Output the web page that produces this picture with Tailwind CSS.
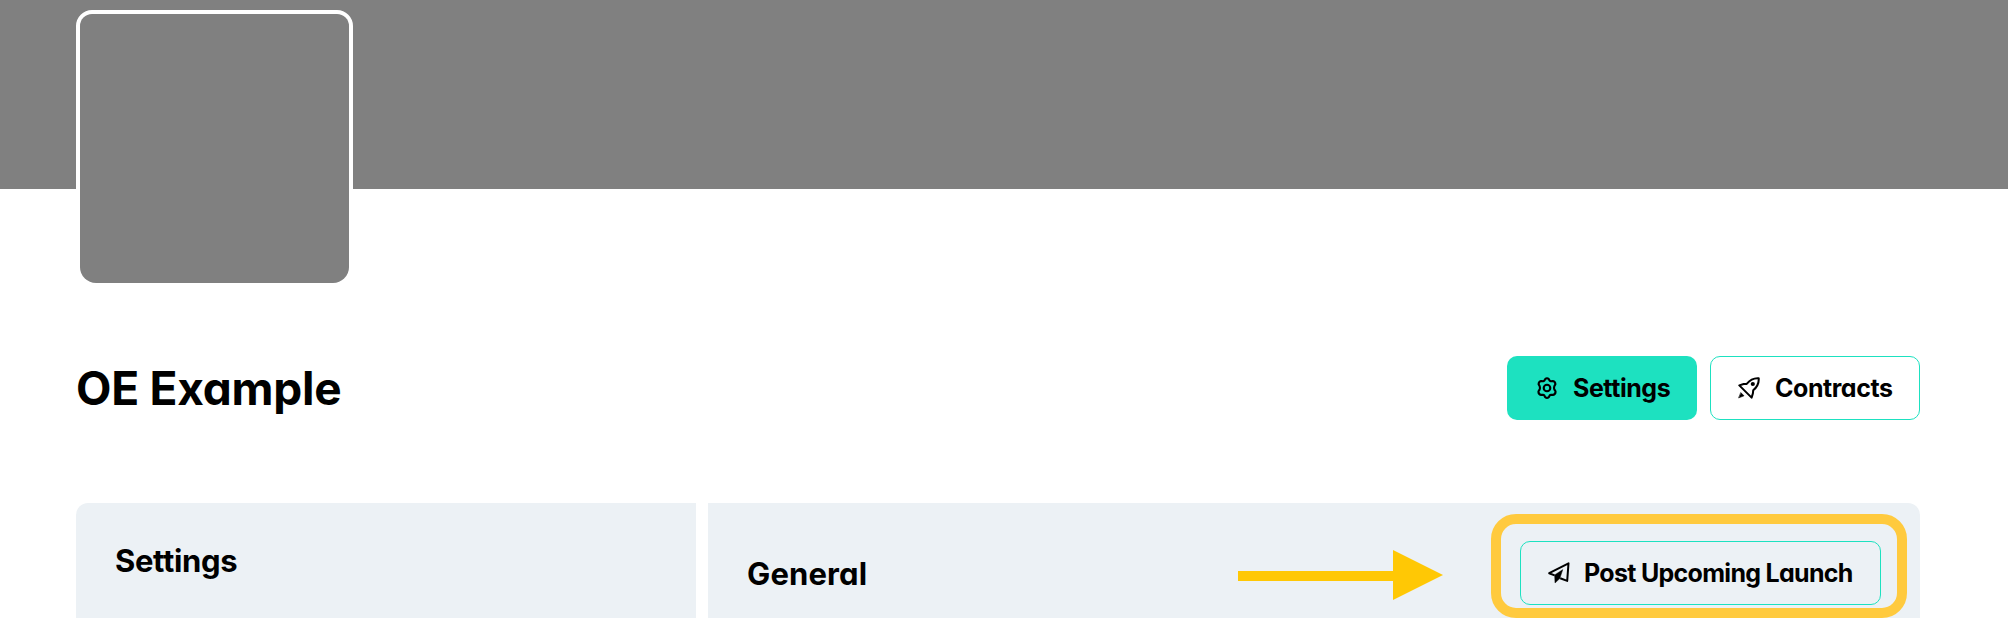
<!DOCTYPE html>
<html lang="en">
<head>
<meta charset="utf-8">
<title>OE Example</title>
<script src="https://cdn.jsdelivr.net/npm/@tailwindcss/browser@4"></script>
</head>
<body class="h-[618px] w-[2008px] overflow-hidden bg-white font-['Inter','Liberation_Sans',sans-serif] font-bold text-black [font-feature-settings:'cv11','ss03']">
  <header class="h-[189px] bg-[#808080] px-[76px] pt-2.5">
    <div class="size-[277px] rounded-2xl border-4 border-white bg-white">
      <div class="size-full rounded-t-xl rounded-b-2xl bg-[#808080]"></div>
    </div>
  </header>
  <main class="px-[76px] pt-[167px] pr-[88px]">
    <div class="flex h-16 items-center justify-between">
      <h1 class="text-[46px] leading-[64px] tracking-[-0.25px] whitespace-nowrap">OE Example</h1>
      <nav class="flex gap-[13px] text-[25px] leading-none tracking-[-0.45px] whitespace-nowrap">
        <button class="flex h-16 w-[190px] items-center rounded-[10px] bg-[#1de1c0] pl-[29px]">
          <svg class="size-[22px] shrink-0" viewBox="0 0 22 22" fill="none" stroke="currentColor" stroke-width="2.1" stroke-linejoin="round"><path d="M9.1 2.2Q11 .2 12.9 2.2L13.7 3.7Q14.2 4.3 15 4.2L16.9 4Q19.4 4.5 19.4 7.2L18.4 9Q17.7 11 18.4 12.6L19.5 14.3Q19.8 17.2 17 17.9L15 17.7Q14.2 17.7 13.7 18.4L12.9 19.9Q11 21.8 9.1 19.9L8.3 18.4Q7.8 17.7 7 17.7L5 17.9Q2.2 17.2 2.5 14.3L3.6 12.6Q4.3 11 3.6 9L2.6 7.2Q2.6 4.5 5.1 4L7 4.2Q7.8 4.3 8.3 3.7Z"/><circle cx="11" cy="11" r="3.3"/></svg>
          <span class="ml-[15px]">Settings</span>
        </button>
        <button class="flex h-16 w-[210px] items-center rounded-[10px] border border-[#1de1c0] pl-[27px]">
          <svg class="size-[22px] shrink-0" viewBox="0 0 22 22" fill="none" stroke="currentColor" stroke-width="2" stroke-linejoin="round" stroke-linecap="round"><path d="M1.3 8.4 5.7 7 8.7 6.9Q13.6.8 20.7 1.3 21.2 8.4 15.2 13.3L14.9 16.4 13.6 20.6Z"/><circle cx="14.8" cy="7" r="2.1" fill="currentColor" stroke="none"/><path d="M3 15.8 6 18.8.9 20.8Z" fill="currentColor" stroke-width=".6"/></svg>
          <span class="ml-[15px]">Contracts</span>
        </button>
      </nav>
    </div>
    <div class="mt-[83px] flex gap-3">
      <section class="h-[115px] w-[620px] rounded-tl-xl bg-[#ecf1f5] pt-[40px] pl-[39px]">
        <h2 class="text-[31px] leading-[36px] tracking-[-0.35px]">Settings</h2>
      </section>
      <section class="flex h-[115px] w-[1212px] rounded-tr-xl bg-[#ecf1f5] pl-[39px]">
        <h2 class="w-[491px] pt-[52px] text-[31px] leading-[37px] tracking-[0.15px]">General</h2>
        <svg class="mt-[47px] h-[50px] w-[205px] shrink-0" viewBox="0 0 205 50" fill="#ffc805"><path d="M0 21H155V0L205 25 155 50V31H0Z"/></svg>
        <div class="mt-[11px] ml-[48px] h-[104px] w-[416px] shrink-0 rounded-[25px] border-10 border-[#ffca3e] pt-[17px] pl-[19px]">
          <button class="flex h-16 w-[361px] items-center rounded-[10px] border border-[#1de1c0] pl-[27px] text-[25px] leading-none tracking-[-0.7px] whitespace-nowrap">
            <svg class="size-[22px] shrink-0" viewBox="0 0 22 22" fill="none" stroke="currentColor" stroke-width="2" stroke-linejoin="round"><path d="M6.6 13.4 1.2 11.2 20.5 1.3 19.2 18.9 12.2 16.2"/><path d="M6.6 12.9 14.8 7.6 11.8 16.6 7 21Z" fill="currentColor" stroke-width=".4"/></svg>
            <span class="ml-[14px]">Post Upcoming Launch</span>
          </button>
        </div>
      </section>
    </div>
  </main>
</body>
</html>
